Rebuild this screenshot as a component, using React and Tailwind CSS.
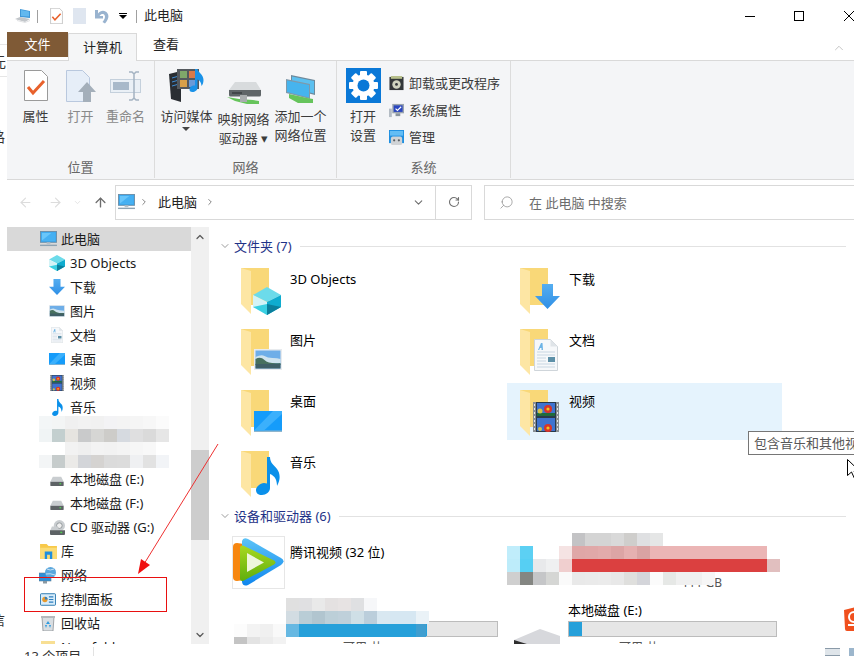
import { ArrowLeft, ArrowRight, ArrowUp, ChevronDown, ChevronRight, ChevronUp, RotateCw, Search } from 'lucide-react'

// ---------- small drawings ----------
function Computer({ className }) {
  return (
    <svg viewBox="0 0 18 17" className={className}>
      <rect x="0.5" y="0.5" width="17" height="11.5" fill="#3aa8ee" stroke="#6d8fa8" />
      <path d="M2 2h14v8H2z" fill="#69c6fa" />
      <path d="M2 10L12 2h4v8z" fill="#45b0f2" />
      <rect x="7" y="12" width="4" height="2" fill="#b4c0c8" />
      <rect x="0" y="14.5" width="18" height="1.5" fill="#8da3b3" />
    </svg>
  )
}

function TitlePc({ className }) {
  return (
    <svg viewBox="0 0 16 14" className={className}>
      <path d="M5 0l10 2v7L5 8z" fill="#3f97d8" />
      <path d="M6 1l8 1.600v5L6 7z" fill="#62b8ef" />
      <path d="M0 10l5-2 10 2-5 3z" fill="#c2c6ca" />
      <path d="M2 12l8 2 5-2v-1l-5 2-8-2z" fill="#e0e2e4" />
    </svg>
  )
}

function Cube({ className }) {
  return (
    <svg viewBox="0 0 28 28" className={className}>
      <path d="M14 0l14 8-14 7L0 8z" fill="#6cdbea" />
      <path d="M0 8l14 7v13L0 20z" fill="#d4f3f6" />
      <path d="M0 20l14-3v11z" fill="#3ad0e2" />
      <path d="M28 8L14 15v13l14-8z" fill="#0faccf" />
      <path d="M28 20l-14-3v11z" fill="#0b7f9c" />
    </svg>
  )
}

function DownArrow({ className }) {
  return (
    <svg viewBox="0 0 25 25" className={className}>
      <defs>
        <linearGradient id="dl" x1="0" y1="0" x2="0" y2="1">
          <stop offset="0" stopColor="#55aef0" />
          <stop offset="1" stopColor="#2f8fe6" />
        </linearGradient>
      </defs>
      <path d="M7 0h11v12h7L12.500 25 0 12h7z" fill="url(#dl)" />
    </svg>
  )
}

function Picture({ className }) {
  return (
    <svg viewBox="0 0 28 21" className={className}>
      <rect width="28" height="21" fill="#e8ebee" />
      <rect x="1.500" y="1.500" width="25" height="18" fill="#6eaee8" />
      <path d="M1.500 8q6-3 9-1t8 2 8 1v4h-25z" fill="#cfe3ee" />
      <path d="M1.500 10q5-3 9 1t16 3v2h-25z" fill="#47705e" />
      <rect x="1.500" y="15" width="25" height="4.500" fill="#3f5f66" />
    </svg>
  )
}

function DocIcon({ className }) {
  return (
    <svg viewBox="0 0 24 32" className={className}>
      <path d="M0.500 0.500h16l7 7v24h-23z" fill="#f6f8fa" stroke="#cfd5da" />
      <path d="M16.500 0.500v7h7z" fill="#dfe4e8" />
      <path d="M4 11l3-7h1.500l.5 7H7.500V9H6l-.8 2z" fill="#6db4e6" />
      <path d="M3 13h18M3 16h18M3 19h9M3 22h9M3 25h18M3 28h18" stroke="#c8d6e2" />
      <rect x="14" y="18" width="7" height="5" fill="#5d90a8" />
    </svg>
  )
}

function Desktop({ className }) {
  return (
    <svg viewBox="0 0 28 21" className={className}>
      <rect width="28" height="21" fill="#8fb5cc" />
      <rect width="28" height="19.500" fill="#159cfa" />
      <path d="M0 19.500L19 0h9v3L10 19.500z" fill="#3bb0fc" />
    </svg>
  )
}

function Film({ className }) {
  return (
    <svg viewBox="0 0 26 30" className={className}>
      <rect width="26" height="30" fill="#8a8f94" />
      <rect x="3" y="0" width="20" height="30" fill="#2a3a4a" />
      <rect x="4" y="1" width="18" height="13" fill="#3f73d0" />
      <rect x="4" y="16" width="18" height="13" fill="#3f73d0" />
      <path d="M4 14v-3h18v3z" fill="#1f6b3c" />
      <circle cx="15" cy="7" r="4" fill="#d8352a" />
      <circle cx="15" cy="7" r="1.600" fill="#f2c521" />
      <circle cx="7" cy="9" r="2.500" fill="#d4c24a" />
      <circle cx="15" cy="26" r="4" fill="#d8352a" />
      <circle cx="15" cy="26" r="1.600" fill="#f2c521" />
      <circle cx="7" cy="27" r="2" fill="#d4c24a" />
      <path d="M1 2h1v2H1zM1 6h1v2H1zM1 10h1v2H1zM1 14h1v2H1zM1 18h1v2H1zM1 22h1v2H1zM1 26h1v2H1zM24 2h1v2h-1zM24 6h1v2h-1zM24 10h1v2h-1zM24 14h1v2h-1zM24 18h1v2h-1zM24 22h1v2h-1zM24 26h1v2h-1z" fill="#e6e6e6" />
    </svg>
  )
}

function Music({ className }) {
  return (
    <svg viewBox="0 0 24 38" className={className}>
      <path d="M11 0h3c0 6 4 8 7 12s4 10 0 17c0-6-2-10-7-12v14c0 4-4 7-8 7s-6-2-6-5 4-7 8-7c1 0 2 .2 3 .6z" fill="#0a90ea" />
    </svg>
  )
}

function Drive({ className }) {
  return (
    <svg viewBox="0 0 16 12" className={className}>
      <path d="M3 1h10l3 6H0z" fill="#c9cdd0" />
      <path d="M0 7h16v4a1 1 0 0 1-1 1H1a1 1 0 0 1-1-1z" fill="#5d6265" />
      <rect x="11" y="8.500" width="2" height="1.500" fill="#4fd24f" />
    </svg>
  )
}

function CdDrive({ className }) {
  return (
    <svg viewBox="0 0 16 16" className={className}>
      <circle cx="10" cy="6" r="6" fill="#c9cdd0" />
      <circle cx="10" cy="6" r="3" fill="#f0f0f0" stroke="#8f9598" />
      <path d="M2 7h6l2 5H0z" fill="#c9cdd0" />
      <path d="M0 11h16v4a1 1 0 0 1-1 1H1a1 1 0 0 1-1-1z" fill="#5d6265" />
      <rect x="11" y="12.500" width="2" height="1.500" fill="#4fd24f" />
    </svg>
  )
}

function Library({ className }) {
  return (
    <svg viewBox="0 0 18 16" className={className}>
      <path d="M0 0h7l2 2h9v14H0z" fill="#f8c94a" />
      <path d="M0 4h18v12H0z" fill="#fbdc76" />
      <path d="M5 16v-8h8v8h-2.500v-4.500h-3V16z" fill="#1f8fe0" />
    </svg>
  )
}

function NetworkIcon({ className }) {
  return (
    <svg viewBox="0 0 18 17" className={className}>
      <rect x="0" y="6" width="12" height="8" fill="#2f8fd8" stroke="#5f7f95" strokeWidth="0.600" />
      <circle cx="11.500" cy="5.500" r="5.500" fill="#5aa7dd" />
      <path d="M8 2q3 2 7 0M7 7q4-1 9 1" stroke="#c8e2f3" fill="none" />
      <rect x="4" y="14" width="4" height="2.500" fill="#8a98a2" />
    </svg>
  )
}

function ControlPanel({ className }) {
  return (
    <svg viewBox="0 0 18 14" className={className}>
      <rect x="0.500" y="0.500" width="17" height="13" rx="1" fill="#d6ecfa" stroke="#1c6fa8" />
      <circle cx="5.500" cy="7" r="3" fill="#e89a2c" />
      <path d="M5.500 7V4a3 3 0 0 1 3 3z" fill="#2f7fc0" />
      <path d="M10 4h5M10 7h5M10 10h5" stroke="#2f7fc0" strokeWidth="1.400" />
    </svg>
  )
}

function Recycle({ className }) {
  return (
    <svg viewBox="0 0 14 16" className={className}>
      <path d="M1 2h12l-1 14H2z" fill="#d9dee2" stroke="#8d9296" strokeWidth="0.800" />
      <path d="M0 1h14v2H0z" fill="#b4b9bd" />
      <path d="M7 6l2 3H5zM4 10h2l-1 3zM10 10H8l1 3z" fill="#2f9be0" />
    </svg>
  )
}

function TitleDoc({ className }) {
  return (
    <svg viewBox="0 0 24 31" className={className}>
      <path d="M0.500 0.500h17l6 6v24h-23z" fill="#fff" stroke="#9a9a9a" />
      <path d="M4 17l5 6 11-12" fill="none" stroke="#e8612c" strokeWidth="3" />
    </svg>
  )
}

function OpenDoc({ className }) {
  return (
    <svg viewBox="0 0 30 32" className={className}>
      <path d="M0.500 0.500h16l7 7v24h-23z" fill="#e6eef8" stroke="#b9c8de" />
      <path d="M21 12l9 10h-5v10h-8V22h-5z" fill="#a4afba" />
    </svg>
  )
}

function Rename({ className }) {
  return (
    <svg viewBox="0 0 31 30" className={className}>
      <rect x="0.500" y="8.500" width="30" height="13" fill="#eaf0f6" stroke="#c4d0dc" />
      <rect x="3" y="11" width="16" height="8" fill="#a8b9ca" />
      <path d="M19 1h3l2 2 2-2h3M24 3v24M19 29h3l2-2 2 2h3" fill="none" stroke="#a4b3c2" strokeWidth="1.500" />
    </svg>
  )
}

function MediaIcon({ className }) {
  return (
    <svg viewBox="0 0 36 33" className={className}>
      <path d="M0 5l12-3v31L2 30z" fill="#2a2e33" />
      <path d="M3 9l7-2M3 13l7-2M3 17l7-2" stroke="#3f8fd8" />
      <rect x="8" y="0" width="22" height="20" fill="#54595e" />
      <rect x="11" y="2" width="7" height="7" fill="#7fa86a" />
      <rect x="20" y="2" width="7" height="7" fill="#d87a4a" />
      <rect x="11" y="11" width="7" height="7" fill="#d8a04a" />
      <rect x="20" y="11" width="7" height="7" fill="#6a9ad8" />
      <path d="M26 0h2.500c0 3 6 5 6 11 0 3-1 5-2 6 0-3-2-6-4-6.500V19c0 2-2.500 4-5 4s-3-1-3-3 3-4 5.500-3.500z" fill="#1a92e8" />
    </svg>
  )
}

function MapDrive({ className }) {
  return (
    <svg viewBox="0 0 34 23" className={className}>
      <path d="M8 1h21l5 8H2z" fill="#d8dbdd" />
      <path d="M2 9h32v5a1.500 1.500 0 0 1-1.500 1.500h-29A1.500 1.500 0 0 1 2 14z" fill="#5f6568" />
      <path d="M5 11h10v2H5z" fill="#42474a" />
      <path d="M0 16l12 2 14 1 6 1v3H20l-12-3z" fill="#66c45c" />
      <rect x="13" y="14" width="7" height="7" fill="#a8acae" />
    </svg>
  )
}

function AddNet({ className }) {
  return (
    <svg viewBox="0 0 29 28" className={className}>
      <path d="M5 0l24 5v15L5 14z" fill="#6f8a9c" />
      <path d="M6 1.500l22 4.500v12.500L6 13z" fill="#5cc0f0" />
      <path d="M0 4l24 5v15L0 18z" fill="#7f99aa" />
      <path d="M1 5.500l22 4.500v12.500L1 17z" fill="#46b4ee" />
      <path d="M3 19l18 4 6 1v4H12L3 23z" fill="#66c45c" />
    </svg>
  )
}

function Gear({ className }) {
  return (
    <svg viewBox="0 0 35 35" className={className}>
      <rect width="35" height="35" fill="#0a78d7" />
      <g fill="#fff">
        <circle cx="17.500" cy="17.500" r="11" />
        <rect x="14" y="3" width="7" height="29" rx="1" />
        <rect x="14" y="3" width="7" height="29" rx="1" transform="rotate(45 17.500 17.500)" />
        <rect x="14" y="3" width="7" height="29" rx="1" transform="rotate(90 17.500 17.500)" />
        <rect x="14" y="3" width="7" height="29" rx="1" transform="rotate(135 17.500 17.500)" />
      </g>
      <circle cx="17.500" cy="17.500" r="6" fill="#0a78d7" />
    </svg>
  )
}

function Uninstall({ className }) {
  return (
    <svg viewBox="0 0 16 16" className={className}>
      <rect x="0.500" y="1" width="15" height="14" fill="#33373a" />
      <rect x="2" y="0" width="12" height="3" fill="#b8c08c" />
      <circle cx="8" cy="9" r="4.500" fill="#cfd3c0" />
      <circle cx="8" cy="9" r="1.500" fill="#33373a" />
    </svg>
  )
}

function SysProps({ className }) {
  return (
    <svg viewBox="0 0 16 16" className={className}>
      <rect x="0" y="6" width="3" height="9" fill="#b4bcc4" />
      <rect x="3.500" y="1" width="12.500" height="10" fill="#9aa4ae" />
      <rect x="5" y="2.500" width="9.500" height="7" fill="#2a46c0" />
      <path d="M7 6l2 2 4-4" stroke="#fff" fill="none" strokeWidth="1.200" />
      <rect x="7" y="11" width="5" height="3" fill="#8a949c" />
    </svg>
  )
}

function Manage({ className }) {
  return (
    <svg viewBox="0 0 16 16" className={className}>
      <rect x="0" y="0" width="16" height="14" fill="#1f8fe0" />
      <rect x="1" y="1" width="14" height="5" fill="#63bdf5" />
      <rect x="2" y="7" width="12" height="9" rx="2" fill="#d0d3d6" />
      <circle cx="5.500" cy="11" r="1.200" fill="#5a5f63" />
      <circle cx="10.500" cy="11" r="1.200" fill="#5a5f63" />
    </svg>
  )
}

function Undo({ className }) {
  return (
    <svg viewBox="0 0 15 15" className={className}>
      <path d="M0 1h3v3.500C5 2 8 1 10.500 2.500 14 4.500 15 9 10 14.500L7.500 13c3-3.500 3-6 1.500-7.500-1.500-1-3-.5-4.500 1.500H8v2.500H0z" fill="#99b3cf" />
    </svg>
  )
}

function TxLogo({ className }) {
  return (
    <svg viewBox="0 0 53 53" className={className}>
      <defs>
        <linearGradient id="txb" x1="0" y1="0" x2="0" y2="1">
          <stop offset="0" stopColor="#5cc3f7" />
          <stop offset="1" stopColor="#0f86ee" />
        </linearGradient>
        <linearGradient id="txg" x1="0" y1="0" x2="0" y2="1">
          <stop offset="0" stopColor="#a8d820" />
          <stop offset="1" stopColor="#5fae0c" />
        </linearGradient>
      </defs>
      <rect x="0.500" y="0.500" width="52" height="52" fill="#fff" stroke="#e6e6e6" />
      <path d="M1 11q0-4 4-4l7 1v36l-7 1q-4 0-4-4z" fill="#f7860f" />
      <path d="M10 5q1-4 6-2l33 19q5 3 0 7L16 49q-5 2-6-3z" fill="url(#txb)" />
      <path d="M8 12q0-3 3-2.500l31 15q3 2 0 4L11 45q-3 .5-3-2.500z" fill="url(#txg)" />
      <path d="M15 17l17 9.500L15 36z" fill="#eef6dc" />
    </svg>
  )
}

// ---------- mosaic blur over private names ----------
function Mosaic({ className, rows }) {
  return (
    <div className={className}>
      {rows.map((row, i) => (
        <div key={i} className="flex h-[13px]">
          {row.map((cell, j) => (
            <div key={j} className={cell.includes(' w-') ? cell : `w-[13px] ${cell}`} />
          ))}
        </div>
      ))}
    </div>
  )
}

const sideMosaic = [
  ['bg-[#f3f6f7]', 'bg-[#f3f5f5]', 'bg-[#f0f0f0]', 'bg-[#f2f2f2]', 'bg-[#f1f1f1]', 'bg-[#f3f3f5]', 'bg-[#f4f4f4]', 'bg-[#f5f5f5]', 'bg-[#f7f7f7]', 'bg-[#fbfbfb]'],
  ['bg-[#f0f4f5]', 'bg-[#c3cfcf]', 'bg-[#e6e4e0]', 'bg-[#c9cacb]', 'bg-[#d6d6d4]', 'bg-[#cdccc9]', 'bg-[#d6dae0]', 'bg-[#dfdfe0]', 'bg-[#dadada]', 'bg-[#e6e6e6]'],
  ['bg-white', 'bg-white', 'bg-[#f2f2f2]', 'bg-[#efefef]', 'bg-[#f3f3f3]', 'bg-[#f2f2f2]', 'bg-[#f4f4f4]', 'bg-[#f6f6f6]', 'bg-[#f8f8f8]', 'bg-white'],
  ['bg-[#f3f5f6]', 'bg-[#c6cccc]', 'bg-[#ebeae8]', 'bg-[#d3d5d9]', 'bg-[#d5d3d1]', 'bg-[#dbdbdb]', 'bg-[#dcdcdc]', 'bg-[#eff0f2]', 'bg-[#e2e2e2]', 'bg-[#f2f4f7]'],
]

const leftDevMosaic = [
  ['bg-[#e0e0e0]', 'bg-[#e0e0e2]', 'bg-[#e9e9e9]', 'bg-[#e4e1e1]', 'bg-[#e7e3e3]', 'bg-[#dfe0e2]', 'bg-[#f6f7f9]'],
  ['bg-[#d2dce2]', 'bg-[#b9cdd6]', 'bg-[#b1c5cf]', 'bg-[#bccfd8]', 'bg-[#bfd0da]', 'bg-[#cfdfe6]', 'bg-[#bbcedb]', 'bg-[#d9e8f1]', 'bg-[#d6e7f2]', 'bg-[#d6e7f2]', 'bg-[#eaf2f7]'],
  ['bg-[#66b8e2]', 'bg-[#26a0da] w-[117px]', 'bg-[#3f9ed0] w-[10px]'],
]

const leftDevLow = [
  ['bg-[#fcfcfc]', 'bg-[#f3f3f3]', 'bg-[#f0f0f0]', 'bg-[#f9f9f9]'],
  ['bg-[#c4c4c4]', 'bg-[#e3e3e3]', 'bg-[#ececec]', 'bg-[#f2f2f2]'],
]

const rightDevMosaic = [
  ['w-[65px]', 'bg-[#c3c3c5]', 'bg-[#d4d4d4]', 'bg-[#d4d4d4]', 'bg-[#d9d9d9]', 'bg-[#cfcecc]', 'bg-[#dfe0e2]', 'bg-[#e5e6e6]'],
  ['bg-[#c0edfb]', 'bg-[#5cd0f3]', 'w-[26px]', 'bg-[#f5e3e3]', 'bg-[#dfa7a7]', 'bg-[#e0a8a8]', 'bg-[#e2abab]', 'bg-[#dca5a5]', 'bg-[#e5b0b0]', 'bg-[#d9a3a3]', 'bg-[#ebb5b5] w-[117px]'],
  ['bg-[#bdecfa]', 'bg-[#56cff3]', 'bg-[#e8e9eb]', 'bg-[#eff0f1]', 'bg-[#f0cfcf]', 'bg-[#db4040] w-[195px]', 'bg-[#e1bfbf]'],
  ['bg-[#cfcfcf]', 'bg-[#848682]', 'bg-[#c5c6c8]', 'bg-[#d5d6d4]', 'bg-[#fafafa]', 'bg-[#e9e9e9]', 'bg-[#eaeaea]', 'bg-[#ebebeb]', 'bg-[#e8e8e8]', 'bg-[#dfdfdd]', 'bg-[#d4d5da]', 'bg-[#fbfbfb]', 'bg-[#e6e8e6]', 'bg-[#f0f0f0] w-[26px]', 'bg-[#f6f6f6]'],
]

// ---------- ribbon ----------
function BigItem({ icon, lines, width, disabled, caret, top }) {
  return (
    <div className={`flex flex-col items-center ${width}`}>
      <div className="h-[43px] flex items-center justify-center">{icon}</div>
      <div className={`flex flex-col items-center text-[13px] leading-[19px] whitespace-nowrap ${disabled ? 'text-[#8a8a8a]' : 'text-[#3b3b3b]'} ${top || ''}`}>
        {lines.map((l) => (
          <span key={l}>{l}</span>
        ))}
        {caret && <span className="w-0 h-0 mt-[1px] border-x-[4px] border-x-transparent border-t-[4px] border-t-[#444]" />}
      </div>
    </div>
  )
}

function RibbonGroup({ width, label, children }) {
  return (
    <div className={`flex flex-col h-[117px] pt-[3px] border-r border-[#dcdcdc] ${width}`}>
      <div className="flex-1 flex items-start">{children}</div>
      <div className="text-center text-[13px] leading-[18px] text-[#666] mb-[2px]">{label}</div>
    </div>
  )
}

function SmallItem({ icon, label }) {
  return (
    <div className="flex items-center gap-[5px] h-[27px] text-[13px] text-[#3b3b3b]">
      {icon}
      <span>{label}</span>
    </div>
  )
}

// ---------- nav pane ----------
function NavRow({ icon, label, sub, selected }) {
  return (
    <div className={`flex items-center h-[24px] text-[13px] text-[#1a1a1a] ${sub ? 'pl-[42px]' : 'pl-[32px]'} ${selected ? 'bg-[#d9d9d9]' : ''}`}>
      <div className={`flex items-center justify-center shrink-0 ${sub ? 'w-[16px] mr-[5px]' : 'w-[18px] mr-[4px]'}`}>{icon}</div>
      <span className="whitespace-nowrap pt-[1px]">{label}</span>
    </div>
  )
}

// ---------- content ----------
function Folder({ children }) {
  return (
    <div className="relative w-[49px] h-[57px] shrink-0">
      <svg viewBox="0 0 49 57" className="w-[49px] h-[57px]">
        <path d="M0 7h28v37H10z" fill="#f9d878" />
        <path d="M0 7l10 3v43L0 43z" fill="#fde6a4" />
      </svg>
      {children}
    </div>
  )
}

function Tile({ name, selected, children }) {
  return (
    <div className={`flex h-[57px] pl-[13px] ${selected ? 'bg-[#e5f3fd]' : ''}`}>
      <Folder>{children}</Folder>
      <div className="pt-[8px] text-[13px] leading-[20px] text-black">{name}</div>
    </div>
  )
}

function GroupHeader({ label, className }) {
  return (
    <div className={`flex items-center h-[20px] pl-[10px] pr-[8px] ${className}`}>
      <ChevronDown className="w-[12px] h-[12px] text-[#7a7a7a]" strokeWidth={1.500} />
      <span className="ml-[3px] mr-[8px] pt-[2px] text-[13px] text-[#1e3287] whitespace-nowrap">{label}</span>
      <div className="flex-1 h-[1px] bg-[#e2e2e2]" />
    </div>
  )
}

export default function App() {
  return (
    <div className="relative w-[854px] h-[656px] overflow-hidden bg-white flex flex-col font-['Noto_Sans','Noto_Sans_CJK_SC',sans-serif]">
      {/* title bar */}
      <div className="flex items-center h-[32px] shrink-0 pl-[15px]">
        <TitlePc className="w-[16px] h-[14px]" />
        <div className="w-px h-[13px] bg-[#a0a0a0] ml-[6px] mr-[12px]" />
        <TitleDoc className="w-[13px] h-[16px]" />
        <div className="w-[13px] h-[16px] ml-[10px] bg-[#dfe6f0]" />
        <Undo className="w-[15px] h-[15px] ml-[9px]" />
        <div className="ml-[9px] flex flex-col items-center">
          <div className="w-[8px] h-px bg-black mb-[1px]" />
          <div className="w-0 h-0 border-x-[4px] border-x-transparent border-t-[4px] border-t-black" />
        </div>
        <div className="w-px h-[13px] bg-[#a0a0a0] ml-[9px] mr-[7px]" />
        <span className="text-[13px] text-[#222]">此电脑</span>
        <div className="ml-auto flex items-center">
          <div className="w-[10px] h-px bg-black mr-[39px]" />
          <div className="w-[10px] h-[10px] border border-black mr-[40px]" />
          <svg viewBox="0 0 10 10" className="w-[10px] h-[10px]">
            <path d="M0 0l10 10M10 0L0 10" stroke="#000" />
          </svg>
        </div>
      </div>

      {/* tabs */}
      <div className="flex items-end h-[28px] shrink-0 pl-[7px] relative">
        <div className="w-[61px] h-[25px] mb-[3px] bg-[#7f5a36] text-white text-[13px] flex items-center justify-center">文件</div>
        <div className="w-[69px] h-[28px] bg-[#f5f6f7] border-x border-t border-[#d9d9d9] text-[13px] text-[#222] flex items-center justify-center z-10 -mb-px">计算机</div>
        <div className="w-[58px] h-[25px] mb-[3px] text-[13px] text-[#222] flex items-center justify-center">查看</div>
        <ChevronUp className="ml-auto mr-[8px] mb-[5px] w-[14px] h-[14px] text-[#bdbdbd]" strokeWidth={1.500} />
      </div>

      {/* ribbon */}
      <div className="flex h-[120px] shrink-0 ml-[7px] bg-[#f4f5f7] border-y border-[#d9d9d9]">
        <RibbonGroup width="w-[148px]" label="位置">
          <div className="flex pl-[6px]">
            <BigItem width="w-[45px]" lines={['属性']} icon={<TitleDoc className="w-[24px] h-[31px]" />} />
            <BigItem width="w-[45px]" lines={['打开']} disabled icon={<OpenDoc className="w-[30px] h-[32px]" />} />
            <BigItem width="w-[45px]" lines={['重命名']} disabled icon={<Rename className="w-[31px] h-[30px]" />} />
          </div>
        </RibbonGroup>
        <RibbonGroup width="w-[182px]" label="网络">
          <div className="flex pl-[3px]">
            <BigItem width="w-[57px]" lines={['访问媒体']} caret icon={<MediaIcon className="w-[36px] h-[33px]" />} />
            <BigItem width="w-[57px]" lines={['映射网络', '驱动器 ▾']} top="mt-[3px]" icon={<MapDrive className="w-[34px] h-[23px] mt-[14px]" />} />
            <BigItem width="w-[57px]" lines={['添加一个', '网络位置']} icon={<AddNet className="w-[29px] h-[28px] mt-[6px]" />} />
          </div>
        </RibbonGroup>
        <RibbonGroup width="w-[174px]" label="系统">
          <div className="flex pl-[6px]">
            <BigItem width="w-[40px]" lines={['打开', '设置']} icon={<Gear className="w-[35px] h-[35px]" />} />
            <div className="ml-[6px] pt-[6px]">
              <SmallItem icon={<Uninstall className="w-[15px] h-[15px]" />} label="卸载或更改程序" />
              <SmallItem icon={<SysProps className="w-[15px] h-[15px]" />} label="系统属性" />
              <SmallItem icon={<Manage className="w-[15px] h-[15px]" />} label="管理" />
            </div>
          </div>
        </RibbonGroup>
      </div>

      {/* address bar */}
      <div className="flex items-center h-[47px] shrink-0 pb-[3px]">
        <div className="flex items-center w-[115px] pl-[18px]">
          <ArrowLeft className="w-[15px] h-[15px] text-[#dcdcdc]" strokeWidth={1.800} />
          <ArrowRight className="w-[15px] h-[15px] ml-[15px] text-[#dcdcdc]" strokeWidth={1.800} />
          <ChevronDown className="w-[9px] h-[9px] ml-[10px] text-[#dcdcdc]" strokeWidth={2} />
          <ArrowUp className="w-[15px] h-[15px] ml-[11px] text-[#6e6e6e]" strokeWidth={2.200} />
        </div>
        <div className="flex items-center w-[357px] h-[35px] border border-[#d9d9d9] text-[13px] text-[#222]">
          <Computer className="w-[17px] h-[16px] ml-[2px]" />
          <ChevronRight className="w-[10px] h-[10px] ml-[4px] text-[#6e6e6e]" />
          <span className="ml-[9px] pt-[2px]">此电脑</span>
          <ChevronRight className="w-[10px] h-[10px] ml-[8px] text-[#6e6e6e]" />
          <ChevronDown className="w-[13px] h-[13px] ml-auto mr-[10px] text-[#6e6e6e]" />
          <div className="flex items-center justify-center w-[36px] h-full border-l border-[#d9d9d9]">
            <RotateCw className="w-[12px] h-[12px] text-[#6e6e6e]" strokeWidth={2.200} />
          </div>
        </div>
        <div className="flex items-center flex-1 ml-[12px] h-[35px] border-y border-l border-[#d9d9d9] text-[13px] text-[#6d6d6d]">
          <Search className="w-[15px] h-[15px] ml-[14px] text-[#8f8f8f] -scale-x-100" strokeWidth={1.200} />
          <span className="ml-[15px] pt-[3px] whitespace-pre">在 此电脑 中搜索</span>
        </div>
      </div>

      {/* main */}
      <div className="flex h-[417px] shrink-0">
        <div className="relative w-[184px] ml-[7px] overflow-hidden shrink-0">
          <NavRow selected label="此电脑" icon={<Computer className="w-[17px] h-[16px]" />} />
          <NavRow sub label="3D Objects" icon={<Cube className="w-[16px] h-[16px]" />} />
          <NavRow sub label="下载" icon={<DownArrow className="w-[16px] h-[16px]" />} />
          <NavRow sub label="图片" icon={<Picture className="w-[16px] h-[12px]" />} />
          <NavRow sub label="文档" icon={<DocIcon className="w-[12px] h-[16px]" />} />
          <NavRow sub label="桌面" icon={<Desktop className="w-[16px] h-[12px]" />} />
          <NavRow sub label="视频" icon={<Film className="w-[14px] h-[16px]" />} />
          <NavRow sub label="音乐" icon={<Music className="w-[11px] h-[17px]" />} />
          <div className="h-[48px]" />
          <NavRow sub label="本地磁盘 (E:)" icon={<Drive className="w-[14px] h-[10px] mt-[3px]" />} />
          <NavRow sub label="本地磁盘 (F:)" icon={<Drive className="w-[14px] h-[10px] mt-[3px]" />} />
          <NavRow sub label="CD 驱动器 (G:)" icon={<CdDrive className="w-[15px] h-[15px]" />} />
          <NavRow label="库" icon={<Library className="w-[17px] h-[15px]" />} />
          <NavRow label="网络" icon={<NetworkIcon className="w-[18px] h-[17px]" />} />
          <NavRow label="控制面板" icon={<ControlPanel className="w-[16px] h-[13px]" />} />
          <NavRow label="回收站" icon={<Recycle className="w-[14px] h-[16px]" />} />
          <NavRow label="New folder" icon={<div className="w-[14px] h-[12px] bg-[#f8df93]" />} />
          <Mosaic className="absolute left-[32px] top-[189px]" rows={sideMosaic} />
        </div>

        {/* nav scrollbar */}
        <div className="flex flex-col items-center w-[18px] shrink-0 bg-[#f0f0f0]">
          <ChevronUp className="w-[12px] h-[12px] mt-[4px] text-[#5a5a5a]" strokeWidth={2.500} />
          <div className="w-full h-[90px] mt-[207px] bg-[#cdcdcd]" />
          <ChevronDown className="w-[12px] h-[12px] mt-auto mb-[3px] text-[#5a5a5a]" strokeWidth={2.500} />
        </div>

        {/* content */}
        <div className="relative flex-1 overflow-hidden pt-[9px]">
          <GroupHeader label="文件夹 (7)" />
          <div className="grid grid-cols-[275px_275px] gap-x-[4px] gap-y-[4px] ml-[19px] mt-[5px]">
            <Tile name="3D Objects">
              <Cube className="absolute left-[12px] top-[26px] w-[28px] h-[28px]" />
            </Tile>
            <Tile name="下载">
              <DownArrow className="absolute left-[15px] top-[23px] w-[25px] h-[25px]" />
            </Tile>
            <Tile name="图片">
              <Picture className="absolute left-[13px] top-[27px] w-[28px] h-[21px]" />
            </Tile>
            <Tile name="文档">
              <DocIcon className="absolute left-[14px] top-[17px] w-[24px] h-[32px]" />
            </Tile>
            <Tile name="桌面">
              <Desktop className="absolute left-[13px] top-[28px] w-[28px] h-[21px]" />
            </Tile>
            <Tile name="视频" selected>
              <Film className="absolute left-[13px] top-[19px] w-[26px] h-[30px]" />
            </Tile>
            <Tile name="音乐">
              <Music className="absolute left-[15px] top-[13px] w-[24px] h-[38px]" />
            </Tile>
          </div>

          <GroupHeader label="设备和驱动器 (6)" className="mt-[5px]" />
          <div className="grid grid-cols-[275px_275px] gap-x-[4px] gap-y-[4px] ml-[19px] mt-[7px]">
            <div className="flex h-[57px] pl-[4px] pt-[3px]">
              <TxLogo className="w-[53px] h-[53px] shrink-0" />
              <div className="ml-[5px] pt-[6px] text-[13px] leading-[20px] text-black">腾讯视频 (32 位)</div>
            </div>
            <div className="flex justify-end items-end h-[57px] pr-[60px] text-[12px] leading-[14px] text-[#555]">111 GB</div>
            <div className="pl-[61px] pt-[6px] h-[57px]">
              <div className="h-[20px]" />
              <div className="w-[209px] h-[16px] mt-px bg-[#e6e6e6] border border-[#bcbcbc]">
                <div className="w-[137px] h-full bg-[#26a0da]" />
              </div>
              <div className="mt-[3px] ml-[54px] text-[12px] leading-[16px] text-[#555]">可用,共</div>
            </div>
            <div className="flex h-[57px] pl-[7px] pt-[6px]">
              <svg viewBox="0 0 46 40" className="w-[46px] h-[40px] mt-[29px] shrink-0">
                <path d="M0 11L26 0l20 7v33H0z" fill="#d7d8dc" />
                <path d="M0 11l16 5v24H0z" fill="#2e2e2e" />
              </svg>
              <div className="ml-[8px]">
                <div className="text-[13px] leading-[20px] text-black">本地磁盘 (E:)</div>
                <div className="w-[209px] h-[16px] mt-px bg-[#e6e6e6] border border-[#bcbcbc]">
                  <div className="w-[13px] h-full bg-[#26a0da]" />
                </div>
                <div className="mt-[3px] ml-[51px] text-[12px] leading-[16px] text-[#555]">可用,共</div>
              </div>
            </div>
          </div>

          <Mosaic className="absolute left-[77px] top-[371px]" rows={leftDevMosaic} />
          <Mosaic className="absolute left-[25px] top-[397px]" rows={leftDevLow} />
          <Mosaic className="absolute left-[298px] top-[306px]" rows={rightDevMosaic} />
        </div>
      </div>

      {/* status bar */}
      <div className="flex h-[12px] shrink-0 pl-[24px] pt-[3px] text-[13px] leading-[18px] text-[#333] overflow-hidden">
        <span>13 个项目</span>
        <div className="w-px h-full bg-[#e2e2e2] ml-[12px]" />
        <div className="ml-auto flex gap-[9px] pt-[1px] pr-0">
          <div className="w-[15px] h-[8px] border-y border-[#8a9aa8] bg-[#dfe5ea]" />
          <div className="w-[5px] h-[8px] bg-[#9cb6cc]" />
        </div>
      </div>

      {/* tooltip */}
      <div className="absolute left-[748px] top-[431px] h-[24px] w-[120px] bg-white border border-[#767676] pl-[5px] text-[13px] leading-[22px] text-[#575757] whitespace-nowrap overflow-hidden">
        包含音乐和其他视
      </div>

      {/* mouse cursor */}
      <svg viewBox="0 0 13 20" className="absolute left-[847px] top-[459px] w-[13px] h-[20px]">
        <path d="M0.500 0.500v16l4-3.500 3 6.500 2.500-1-3-6.500h5.500z" fill="#fff" stroke="#000" />
      </svg>

      {/* floating badge at the right edge */}
      <svg viewBox="0 0 14 24" className="absolute left-[842px] top-[607px] w-[14px] h-[24px]">
        <path d="M2 3l12-3v24H5q-2 0-2-2z" fill="#f0501e" />
        <circle cx="12" cy="10" r="5" fill="none" stroke="#fff" strokeWidth="2" />
        <path d="M6 18h8" stroke="#fff" strokeWidth="2" />
      </svg>

      {/* annotation */}
      <div className="absolute left-[24px] top-[577px] w-[143px] h-[35px] border border-[#e81010]" />
      <svg viewBox="0 0 854 656" className="absolute inset-0 w-[854px] h-[656px] pointer-events-none">
        <path d="M218 444L144 564" stroke="#ee3030" strokeWidth="1" fill="none" />
        <path d="M138 574l3-15 9 6z" fill="#f01010" />
      </svg>

      {/* cut-off text and lines from the window behind */}
      <div className="absolute left-0 top-[44px] w-[7px] h-px bg-[#e6e6e6]" />
      <div className="absolute left-0 top-[76px] w-[7px] h-px bg-[#e6e6e6]" />
      <span className="absolute -left-[8px] top-[51px] text-[14px] text-[#333]">元</span>
      <span className="absolute -left-[9px] top-[126px] text-[14px] text-[#333]">路</span>
      <span className="absolute -left-[9px] top-[609px] text-[14px] text-[#333]">信</span>
    </div>
  )
}
